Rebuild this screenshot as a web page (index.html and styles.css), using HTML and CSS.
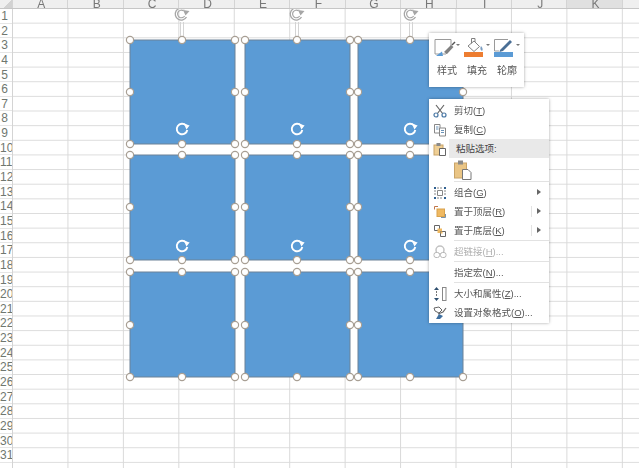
FILE: index.html
```html
<!DOCTYPE html>
<html lang="zh-CN">
<head>
  <meta charset="UTF-8">
  <title>工作表</title>
  <link rel="stylesheet" href="styles.css">
</head>
<body>
  <div class="sheet">
    <div class="col-head">
      <div class="corner"></div>
      <span class="col">A</span>
      <span class="col">B</span>
      <span class="col">C</span>
      <span class="col">D</span>
      <span class="col">E</span>
      <span class="col">F</span>
      <span class="col">G</span>
      <span class="col">H</span>
      <span class="col">I</span>
      <span class="col">J</span>
      <span class="col col-on">K</span>
      <span class="col"></span>
    </div>
    <div class="sheet-body">
      <div class="row-head">
        <span>1</span><span>2</span><span>3</span><span>4</span><span>5</span><span>6</span><span>7</span><span>8</span>
        <span>9</span><span>10</span><span>11</span><span>12</span><span>13</span><span>14</span><span>15</span><span>16</span>
        <span>17</span><span>18</span><span>19</span><span>20</span><span>21</span><span>22</span><span>23</span><span>24</span>
        <span>25</span><span>26</span><span>27</span><span>28</span><span>29</span><span>30</span><span>31</span>
      </div>
      <div class="cells"></div>
    </div>

    <!-- shapes on the sheet -->
    <svg class="canvas" width="639" height="468" viewBox="0 0 639 468">
      <defs>
        <g id="rot">
          <path d="M4 -3.600A5.300 5.300 0 1 0 5.300 1" fill="none" stroke-width="1.900"/>
          <path d="M1.800 -5.600L7.600 -3.400L4.400 0.400z" stroke="none"/>
        </g>
        <g id="rot-top">
          <path d="M3.500 -5A6 6 0 1 0 5.500 3" fill="none" stroke="#a6a6a6" stroke-width="1.300"/>
          <path d="M2.500 -3.200A3.800 3.800 0 1 0 3.600 2" fill="none" stroke="#a6a6a6" stroke-width="1.200"/>
          <path d="M2 -4L8.500 -3L4.500 1.500z" fill="#a6a6a6"/>
        </g>
        <circle id="h" r="3.600" fill="#fff" stroke="#a89f94" stroke-width="1.200"/>
      </defs>
      <rect x="130" y="40" width="333" height="337" fill="#fff"/>
      <g fill="#5b9bd5" stroke="#6d8297" stroke-width="1">
        <rect x="130" y="40" width="105" height="104"/>
        <rect x="245" y="40" width="105" height="104"/>
        <rect x="358" y="40" width="105" height="104"/>
        <rect x="130" y="155" width="105" height="105"/>
        <rect x="245" y="155" width="105" height="105"/>
        <rect x="358" y="155" width="105" height="105"/>
        <rect x="130" y="272" width="105" height="105"/>
        <rect x="245" y="272" width="105" height="105"/>
        <rect x="358" y="272" width="105" height="105"/>
      </g>
      <g stroke="#d4d4d4" stroke-width="1">
        <path d="M180.500 22V38M183.500 22V38M295.500 22V38M298.500 22V38M409.500 22V38M412.500 22V38"/>
      </g>
      <use href="#rot-top" x="181" y="14"/>
      <use href="#rot-top" x="296" y="14"/>
      <use href="#rot-top" x="410" y="14"/>
      <g fill="#fff" stroke="#fff">
        <use href="#rot" x="182" y="129"/>
        <use href="#rot" x="297" y="129"/>
        <use href="#rot" x="410" y="129"/>
        <use href="#rot" x="182" y="246"/>
        <use href="#rot" x="297" y="246"/>
        <use href="#rot" x="410" y="246"/>
      </g>
      <use href="#h" x="130" y="40"/><use href="#h" x="182" y="40"/><use href="#h" x="235" y="40"/>
      <use href="#h" x="245" y="40"/><use href="#h" x="297" y="40"/><use href="#h" x="350" y="40"/>
      <use href="#h" x="358" y="40"/><use href="#h" x="410" y="40"/><use href="#h" x="463" y="40"/>
      <use href="#h" x="130" y="92"/><use href="#h" x="235" y="92"/><use href="#h" x="245" y="92"/>
      <use href="#h" x="350" y="92"/><use href="#h" x="358" y="92"/><use href="#h" x="463" y="92"/>
      <use href="#h" x="130" y="144"/><use href="#h" x="182" y="144"/><use href="#h" x="235" y="144"/>
      <use href="#h" x="245" y="144"/><use href="#h" x="297" y="144"/><use href="#h" x="350" y="144"/>
      <use href="#h" x="358" y="144"/><use href="#h" x="410" y="144"/>
      <use href="#h" x="130" y="155"/><use href="#h" x="182" y="155"/><use href="#h" x="235" y="155"/>
      <use href="#h" x="245" y="155"/><use href="#h" x="297" y="155"/><use href="#h" x="350" y="155"/>
      <use href="#h" x="358" y="155"/><use href="#h" x="410" y="155"/>
      <use href="#h" x="130" y="207"/><use href="#h" x="235" y="207"/><use href="#h" x="245" y="207"/>
      <use href="#h" x="350" y="207"/><use href="#h" x="358" y="207"/>
      <use href="#h" x="130" y="260"/><use href="#h" x="182" y="260"/><use href="#h" x="235" y="260"/>
      <use href="#h" x="245" y="260"/><use href="#h" x="297" y="260"/><use href="#h" x="350" y="260"/>
      <use href="#h" x="358" y="260"/><use href="#h" x="410" y="260"/>
      <use href="#h" x="130" y="272"/><use href="#h" x="182" y="272"/><use href="#h" x="235" y="272"/>
      <use href="#h" x="245" y="272"/><use href="#h" x="297" y="272"/><use href="#h" x="350" y="272"/>
      <use href="#h" x="358" y="272"/><use href="#h" x="410" y="272"/>
      <use href="#h" x="130" y="325"/><use href="#h" x="235" y="325"/><use href="#h" x="245" y="325"/>
      <use href="#h" x="350" y="325"/><use href="#h" x="358" y="325"/>
      <use href="#h" x="130" y="377"/><use href="#h" x="182" y="377"/><use href="#h" x="235" y="377"/>
      <use href="#h" x="245" y="377"/><use href="#h" x="297" y="377"/><use href="#h" x="350" y="377"/>
      <use href="#h" x="358" y="377"/><use href="#h" x="410" y="377"/><use href="#h" x="463" y="377"/>
    </svg>

    <!-- mini toolbar -->
    <div class="mini-bar">
      <div class="mini-btn">
        <svg width="28" height="22" viewBox="0 0 28 22">
          <path d="M2 2.500H18V10L13 17H2z" fill="#fff" stroke="#9a9a9a"/>
          <path d="M11 15L18 8L20.500 10L14 17z" fill="#808080"/>
          <path d="M19 8L22 5" stroke="#555" stroke-width="1.500"/>
          <path d="M3 19L9 14.500L10 19z" fill="#5b9bd5"/>
          <path d="M23 7H27L25 9z" fill="#777"/>
        </svg>
        <span>样式</span>
      </div>
      <div class="mini-btn">
        <svg width="28" height="22" viewBox="0 0 28 22">
          <path d="M5 9L11 4L16.500 9.500L11 14.500z" fill="#fff" stroke="#808080"/>
          <path d="M8.500 6.500V1.500H12V5" fill="none" stroke="#808080"/>
          <path d="M18 9C20 11 20 13 19 14C17 13 17 11 18 9z" fill="#7a9cc0"/>
          <rect x="1" y="15" width="19" height="5" fill="#ed7d31"/>
          <path d="M23 7H27L25 9z" fill="#777"/>
        </svg>
        <span>填充</span>
      </div>
      <div class="mini-btn">
        <svg width="28" height="22" viewBox="0 0 28 22">
          <path d="M15 2.500H1.500V14H6" fill="none" stroke="#9a9a9a"/>
          <path d="M7 13L17 3L19 5L10 14L6.500 15z" fill="#4a6f95"/>
          <rect x="1" y="15" width="19" height="5" fill="#5b9bd5"/>
          <path d="M23 7H27L25 9z" fill="#777"/>
        </svg>
        <span>轮廓</span>
      </div>
    </div>

    <!-- context menu -->
    <div class="menu">
      <div class="item">
        <svg class="ico" width="14" height="14" viewBox="0 0 14 14">
          <path d="M3 1L10 10M11 1L4 10" stroke="#666" stroke-width="1.200" fill="none"/>
          <circle cx="3" cy="11" r="2" fill="#fff" stroke="#4a78a5" stroke-width="1.200"/>
          <circle cx="11" cy="11" r="2" fill="#fff" stroke="#4a78a5" stroke-width="1.200"/>
        </svg>
        <span class="label">剪切(<u>T</u>)</span>
      </div>
      <div class="item">
        <svg class="ico" width="14" height="14" viewBox="0 0 14 14">
          <path d="M1.500 1.500H7V10H1.500z" fill="#fff" stroke="#888"/>
          <path d="M6.500 5H12.500V13H6.500z" fill="#fff" stroke="#888"/>
          <path d="M3 4H5.500M3 6H5.500M8 7.500H11M8 9.500H11" stroke="#6b93b8"/>
        </svg>
        <span class="label">复制(<u>C</u>)</span>
      </div>
      <div class="item item-head">
        <svg class="ico" width="14" height="14" viewBox="0 0 14 14">
          <rect x="1" y="3" width="9" height="10" fill="#efcf95" stroke="#c9a468"/>
          <rect x="3.500" y="1" width="4" height="3" fill="#8a8a8a"/>
          <path d="M6.500 6.500H12.500V13.500H6.500z" fill="#fff" stroke="#666"/>
        </svg>
        <span class="label">粘贴选项:</span>
      </div>
      <div class="paste-row">
        <svg width="20" height="20" viewBox="0 0 20 20">
          <rect x="1.500" y="3" width="12" height="15" fill="#eac585" stroke="#c9a468"/>
          <rect x="5" y="0.500" width="5" height="4" fill="#8a8a8a"/>
          <path d="M9.500 9.500H15L18 12.500V19.500H9.500z" fill="#fff" stroke="#777"/>
        </svg>
      </div>
      <div class="sep"></div>
      <div class="item">
        <svg class="ico" width="14" height="14" viewBox="0 0 14 14">
          <path d="M4.500 4.500H9.500V9.500H4.500z" fill="none" stroke="#888"/>
          <path d="M1 1H3V3H1zM11 1H13V3H11zM1 11H3V13H1zM11 11H13V13H11z" fill="#2f5f8f"/>
          <path d="M4 2H10M2 4V10M12 4V10M4 12H10" stroke="#888" stroke-dasharray="2 1"/>
        </svg>
        <span class="label">组合(<u>G</u>)</span>
        <i class="arrow"></i>
      </div>
      <div class="item">
        <svg class="ico" width="14" height="14" viewBox="0 0 14 14">
          <path d="M1.500 4.500V1.500H5" fill="none" stroke="#c0764a"/>
          <rect x="4" y="4" width="7.500" height="7.500" fill="#efb962" stroke="#d9a24c"/>
          <path d="M12.500 9V12.500H8" fill="none" stroke="#7a93ab"/>
        </svg>
        <span class="label">置于顶层(<u>R</u>)</span>
        <b class="bar"></b>
        <i class="arrow"></i>
      </div>
      <div class="item">
        <svg class="ico" width="14" height="14" viewBox="0 0 14 14">
          <path d="M1.500 1.500H6.500V6.500H1.500z" fill="#fff" stroke="#666"/>
          <rect x="4.500" y="4.500" width="4.500" height="4.500" fill="#efb962"/>
          <path d="M7.500 7.500H12.500V12.500H7.500z" fill="#fff" stroke="#666"/>
          <rect x="7.500" y="7.500" width="2" height="2" fill="#efb962"/>
        </svg>
        <span class="label">置于底层(<u>K</u>)</span>
        <b class="bar"></b>
        <i class="arrow"></i>
      </div>
      <div class="sep"></div>
      <div class="item item-off">
        <svg class="ico" width="14" height="14" viewBox="0 0 14 14">
          <circle cx="7" cy="5" r="4" fill="none" stroke="#c2c2c2" stroke-width="1.500"/>
          <rect x="1" y="7.500" width="5.500" height="5" rx="2" fill="#fff" stroke="#b8b8b8"/>
          <rect x="7.500" y="7.500" width="5.500" height="5" rx="2" fill="#fff" stroke="#b8b8b8"/>
        </svg>
        <span class="label">超链接(<u>H</u>)...</span>
      </div>
      <div class="sep"></div>
      <div class="item">
        <span class="label">指定宏(<u>N</u>)...</span>
      </div>
      <div class="sep"></div>
      <div class="item">
        <svg class="ico" width="14" height="16" viewBox="0 0 14 16">
          <path d="M3.500 5V11" stroke="#777" stroke-dasharray="2 1"/>
          <path d="M1 4L3.500 1L6 4zM1 12L3.500 15L6 12z" fill="#2f4f6f"/>
          <rect x="9.500" y="1.500" width="3.500" height="13" fill="#fff" stroke="#888"/>
        </svg>
        <span class="label">大小和属性(<u>Z</u>)...</span>
      </div>
      <div class="item">
        <svg class="ico" width="14" height="14" viewBox="0 0 14 14">
          <path d="M1 2L6 1L9 4L6 7L2 5z" fill="#fff" stroke="#666"/>
          <path d="M5 8L10 6L13 2" stroke="#666" stroke-width="1.200" fill="none"/>
          <path d="M3 13L6 8L10 10L7 13z" fill="#3f6f9f"/>
        </svg>
        <span class="label">设置对象格式(<u>O</u>)...</span>
      </div>
    </div>
  </div>
</body>
</html>
```

FILE: styles.css
```css
html, body {
  margin: 0;
  padding: 0;
  background: #fff;
}

.sheet {
  position: relative;
  width: 639px;
  height: 468px;
  overflow: hidden;
  font-family: 'Liberation Sans', 'Noto Sans CJK SC', sans-serif;
  filter: blur(0.35px);
}

.col-head {
  position: relative;
  z-index: 2;
  display: flex;
  height: 8px;
  background: #efefef;
  border-bottom: 1px solid #c6c6c6;
  overflow: hidden;
}

.corner {
  flex: none;
  width: 13px;
  background: linear-gradient(135deg, #efefef 60%, #d2d2d2 60%);
  border-right: 1px solid #d4d4d4;
  box-sizing: border-box;
}

.col {
  flex: none;
  width: 55.45px;
  box-sizing: border-box;
  border-right: 1px solid #d4d4d4;
  padding-left: 2px;
  text-align: center;
  font-size: 12px;
  line-height: 8px;
  color: #777;
}

.col-on {
  background: #e0e0e0;
}

.sheet-body {
  display: flex;
  height: 459px;
}

.row-head {
  flex: none;
  width: 13px;
  box-sizing: border-box;
  display: flex;
  flex-direction: column;
  overflow: hidden;
  background: #fff;
  border-right: 1px solid #d4d4d4;
}

.row-head span {
  flex: none;
  height: 14.65px;
  box-sizing: border-box;
  border-bottom: 1px solid #e6e6e6;
  padding-right: 4px;
  text-align: right;
  font-size: 12px;
  line-height: 14px;
  color: #6f776f;
}

.cells {
  flex: 1;
  background-image:
    linear-gradient(to right, transparent 54.45px, #d9d9d9 54.45px),
    linear-gradient(to bottom, transparent 13.65px, #dcdcdc 13.65px);
  background-size: 55.45px 14.65px;
}

.canvas {
  position: absolute;
  top: 0;
  left: 0;
  z-index: 1;
}

.mini-bar {
  position: absolute;
  z-index: 3;
  left: 429px;
  top: 33px;
  width: 95px;
  height: 54px;
  box-sizing: border-box;
  display: flex;
  padding: 4px 0 0 3px;
  background: #fff;
  box-shadow: 0 0 3px rgba(0, 0, 0, 0.35);
}

.mini-btn {
  flex: none;
  width: 30px;
  display: flex;
  flex-direction: column;
  align-items: center;
  gap: 5px;
  font-size: 10px;
  line-height: 14px;
  color: #555;
}

.menu {
  position: absolute;
  z-index: 3;
  left: 429px;
  top: 99px;
  width: 120px;
  height: 224px;
  box-sizing: border-box;
  padding-top: 2px;
  background: #fff;
  box-shadow: 0 0 3px rgba(0, 0, 0, 0.35);
  font-size: 9.5px;
  color: #555;
}

.item {
  position: relative;
  box-sizing: border-box;
  display: flex;
  align-items: center;
  height: 19px;
  padding: 0 0 2px 25px;
}

.ico {
  position: absolute;
  left: 4px;
  top: 50%;
  transform: translateY(-50%);
}

.item-head {
  margin-left: 20px;
  padding-left: 7px;
  background: #e9e9e9;
  color: #444;
}

.item-head .ico {
  left: -16px;
}

.item-off {
  color: #b0b0b0;
}

.paste-row {
  height: 23px;
  padding-left: 24px;
  display: flex;
  align-items: center;
}

.sep {
  height: 1px;
  margin: 0 0 1px 25px;
  background: #e2e2e2;
}

.arrow {
  position: absolute;
  left: 108px;
  top: 6px;
  border-left: 4px solid #666;
  border-top: 3.5px solid transparent;
  border-bottom: 3.5px solid transparent;
}

.bar {
  position: absolute;
  left: 102px;
  top: 4px;
  width: 1px;
  height: 11px;
  background: #e2e2e2;
}
```
